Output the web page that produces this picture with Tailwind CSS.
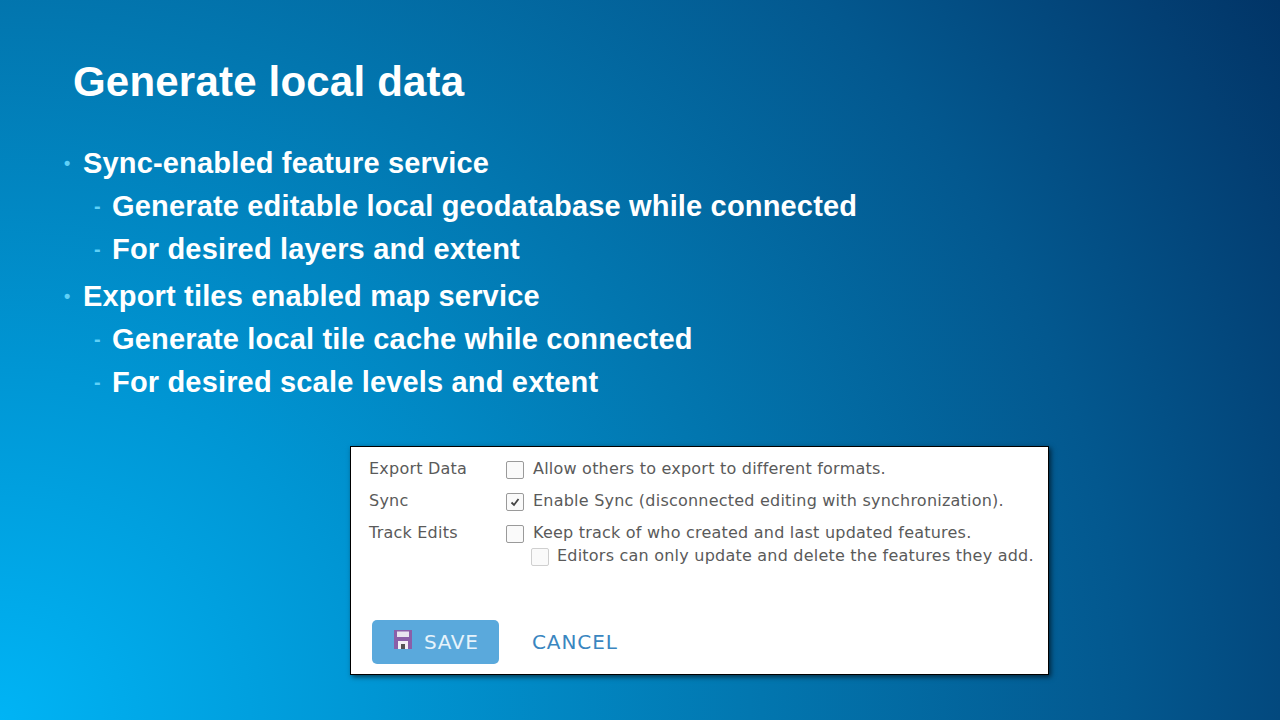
<!DOCTYPE html>
<html lang="en">

<head>
  <meta charset="UTF-8" />
  <title>Generate local data</title>
  <script src="https://cdn.jsdelivr.net/npm/@tailwindcss/browser@4"></script>
</head>

<body class="m-0">
  <div class="w-[1280px] h-[720px] overflow-hidden pt-[55px] font-['Liberation_Sans',sans-serif] text-white bg-[radial-gradient(ellipse_1500px_1400px_at_0%_100%,#00b4f5_0%,#0096d4_25%,#0277b0_50%,#03588f_75%,#033f73_92%,#013466_100%)]">
    <h1 class="ml-[73px] text-[42px] leading-[54px] font-bold tracking-[0.2px]">Generate local data</h1>

    <!-- Bullets -->
    <div class="mt-[33px] ml-[64px] font-bold text-[29px] leading-[43px] tracking-[0.17px]">
      <div class="flex items-center">
        <span class="w-[19px] text-[#5fd0f7] text-[18px]">•</span>
        <span>Sync-enabled feature service</span>
      </div>
      <div class="flex items-center pl-[30px]">
        <span class="w-[18px] text-[#5fd0f7] text-[20px]">-</span>
        <span>Generate editable local geodatabase while connected</span>
      </div>
      <div class="flex items-center pl-[30px]">
        <span class="w-[18px] text-[#5fd0f7] text-[20px]">-</span>
        <span>For desired layers and extent</span>
      </div>
      <div class="flex items-center mt-[4px]">
        <span class="w-[19px] text-[#5fd0f7] text-[18px]">•</span>
        <span>Export tiles enabled map service</span>
      </div>
      <div class="flex items-center pl-[30px]">
        <span class="w-[18px] text-[#5fd0f7] text-[20px]">-</span>
        <span>Generate local tile cache while connected</span>
      </div>
      <div class="flex items-center pl-[30px]">
        <span class="w-[18px] text-[#5fd0f7] text-[20px]">-</span>
        <span>For desired scale levels and extent</span>
      </div>
    </div>

    <!-- Settings card -->
    <div class="mt-[42px] ml-[350px] w-[699px] h-[229px] bg-white border border-black shadow-[2px_2px_5px_rgba(0,0,0,0.6)] font-['DejaVu_Sans',sans-serif] text-[16px] tracking-[0.22px] text-[#5a5a5a] pt-[6px] pl-[18px]">
      <div class="flex items-center h-[32px]">
        <span class="w-[137px]">Export Data</span>
        <span class="w-[18px] h-[18px] mt-[2px] mr-[9px] border border-[#9a9a9a] rounded-[2px] bg-[#fafafa]"></span>
        <span>Allow others to export to different formats.</span>
      </div>
      <div class="flex items-center h-[32px]">
        <span class="w-[137px]">Sync</span>
        <span class="w-[18px] h-[18px] mt-[2px] mr-[9px] border border-[#9a9a9a] rounded-[2px] bg-[#fafafa] flex items-center justify-center">
          <svg width="12" height="12" viewBox="0 0 12 12"><path d="M2.5 6.5 L5 9 L9.5 3" fill="none" stroke="#444" stroke-width="1.8" /></svg>
        </span>
        <span>Enable Sync (disconnected editing with synchronization).</span>
      </div>
      <div class="flex items-center h-[32px]">
        <span class="w-[137px]">Track Edits</span>
        <span class="w-[18px] h-[18px] mt-[2px] mr-[9px] border border-[#9a9a9a] rounded-[2px] bg-[#fafafa]"></span>
        <span>Keep track of who created and last updated features.</span>
      </div>
      <div class="flex items-center h-[16px] -mt-[1px] pl-[162px]">
        <span class="w-[18px] h-[18px] mt-[2px] mr-[8px] border border-[#cfcfcf] rounded-[2px] bg-[#fafafa]"></span>
        <span>Editors can only update and delete the features they add.</span>
      </div>

      <div class="flex items-center mt-[56px] ml-[3px]">
        <div class="w-[127px] h-[44px] rounded-[5px] bg-[#5aa9dc] flex items-center pl-[22px] text-[#e6f3fb] text-[20px] tracking-[0.7px]">
          <svg class="mr-[12px] mb-[5px]" width="18" height="19" viewBox="0 0 18 19">
            <rect width="18" height="19" fill="#8a5fa8" />
            <rect x="3" y="1.5" width="12" height="5.5" fill="#e8e4ef" />
            <rect x="4" y="11" width="10" height="8" fill="#f3f0f6" />
            <rect x="7" y="14" width="4" height="5" fill="#555" />
          </svg>
          <span>SAVE</span>
        </div>
        <span class="ml-[33px] text-[#3a86c0] text-[20px] tracking-[0.9px]">CANCEL</span>
      </div>
    </div>
  </div>
</body>

</html>
